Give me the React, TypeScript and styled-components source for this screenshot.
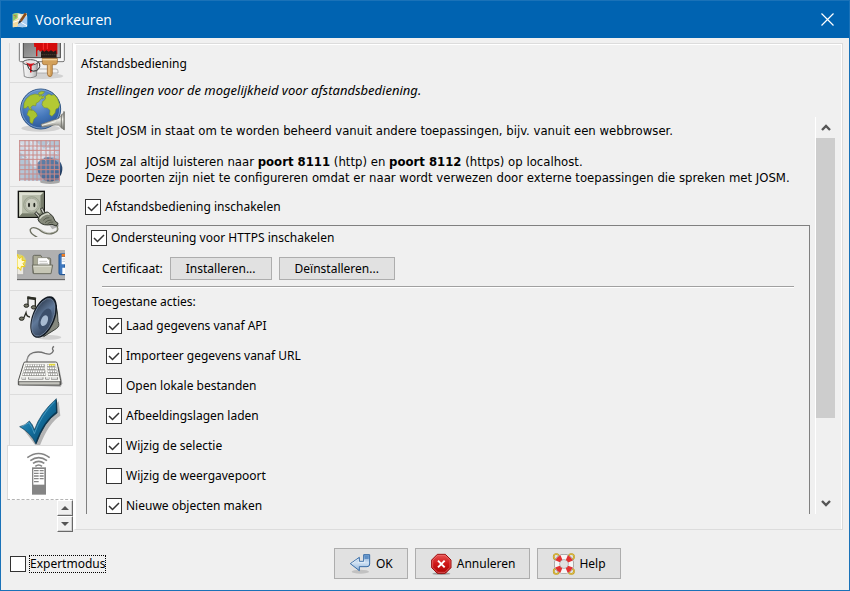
import React, { useState } from 'react';
import styled, { createGlobalStyle, css } from 'styled-components';

const GlobalStyle = createGlobalStyle`
  *, *::before, *::after { box-sizing: border-box; }
  body {
    margin: 0;
    background: #f0f0f0;
    color: #000;
    font-family: "Noto Sans", sans-serif;
    font-size: 12px;
    line-height: 16px;
  }
  button, input { font: inherit; color: inherit; margin: 0; }
`;

/* ---------- window frame ---------- */

const Window = styled.div`
  display: flex;
  flex-direction: column;
  height: 100vh;
  border: 1px solid #1a72b8;
  border-width: 0 1px 1px;
  background: #f0f0f0;
`;

const TitleBar = styled.header`
  display: flex;
  align-items: center;
  flex: none;
  gap: 7px;
  height: 38px;
  padding: 0 15px 0 11px;
  border-top: 1px solid #1a72b8;
  background: #0063b1;
  color: #fff;
`;

const Title = styled.h1`
  flex: 1;
  margin: 0;
  font-family: "Open Sans", "Noto Sans", sans-serif;
  font-size: 14px;
  font-weight: 400;
  line-height: 20px;
`;

const CloseButton = styled.button`
  display: flex;
  padding: 0;
  border: 0;
  background: none;
`;

const Body = styled.div`
  display: flex;
  flex: 1;
  min-height: 0;
  padding: 5px 6px 0;
`;

/* ---------- category tabs ---------- */

const Sidebar = styled.nav`
  display: flex;
  flex: none;
  flex-direction: column;
  width: 66px;
`;

const TabStrip = styled.div`
  display: flex;
  flex: 1;
  flex-direction: column;
  justify-content: flex-end;
  min-height: 0;
  overflow: hidden;
`;

const Tab = styled.button<{ $selected?: boolean }>`
  display: flex;
  flex: none;
  align-items: center;
  justify-content: center;
  height: 52px;
  margin: 0 0 0 2px;
  padding: 0;
  border: 1px solid #dcdcdc;
  border-top: 0;
  background: #f0f0f0;
  ${(p) =>
    p.$selected &&
    css`
      z-index: 1;
      height: 55px;
      margin: -2px 0 0;
      border-top: 1px solid #dcdcdc;
      border-right: 0;
      border-bottom: 1px dashed #b4b4b4;
      background: #fff;
    `}
`;

const Steppers = styled.div`
  display: flex;
  flex: none;
  flex-direction: column;
  align-self: flex-end;
  height: 32px;
`;

const Stepper = styled.button`
  display: flex;
  align-items: center;
  justify-content: center;
  width: 16px;
  height: 16px;
  padding: 0;
  border: 1px solid;
  border-color: #fff #696969 #696969 #fff;
  box-shadow: inset -1px -1px #d0d0d0;
  background: #f0f0f0;
`;

/* ---------- settings panel ---------- */

const Panel = styled.main`
  display: flex;
  flex: 1;
  flex-direction: column;
  min-width: 0;
  margin-bottom: 2px;
  padding: 12px 7px 15px 5px;
  border: 1px solid #dcdcdc;
  border-left: 3px solid #fff;
  box-shadow: inset 0 1px #fff, inset -1px 0 #fff;
`;

const PanelTitle = styled.h2`
  margin: 0;
  font-size: 12px;
  font-weight: 400;
  line-height: 16px;
`;

const Intro = styled.p`
  margin: 10px 6px 19px;
  font-size: 13px;
  font-style: italic;
`;

const ScrollPane = styled.div`
  display: flex;
  flex: 1;
  min-height: 0;
`;

const Content = styled.div`
  display: flex;
  flex: 1;
  flex-direction: column;
  min-width: 0;
  overflow: hidden;
  padding: 6px 5px 0 4px;
`;

const Description = styled.div`
  display: flex;
  flex-direction: column;
  gap: 15px;
  margin: 0 0 13px 1px;
  font-family: "DejaVu Sans Condensed", "Noto Sans", sans-serif;
  font-size: 13px;
`;

const Paragraph = styled.p`
  margin: 0;
`;

const ScrollBar = styled.div`
  display: flex;
  flex: none;
  flex-direction: column;
  width: 20px;
  border-left: 1px solid #fff;
`;

const ScrollButton = styled.button`
  display: flex;
  flex: none;
  align-items: center;
  justify-content: center;
  height: 21px;
  padding: 0;
  border: 0;
  background: none;
`;

const ScrollTrack = styled.div`
  flex: 1;
`;

const ScrollThumb = styled.div`
  height: 79%;
  background: #cdcdcd;
`;

/* ---------- form parts ---------- */

const CheckLabel = styled.label`
  display: flex;
  align-items: center;
  gap: 4px;
  width: fit-content;
`;

const CheckInput = styled.input`
  appearance: none;
  width: 16px;
  height: 16px;
  border: 1px solid #333;
  background: #fff;
`;

const CheckBox = styled.span`
  display: grid;
  flex: none;
  width: 16px;
  height: 16px;
  > * { grid-area: 1 / 1; }
  svg { z-index: 1; pointer-events: none; }
`;

const CheckText = styled.span<{ $focused?: boolean }>`
  outline: ${(p) => (p.$focused ? '1px dotted #000' : 'none')};
`;

const Group = styled.section`
  display: flex;
  flex: 1 0 auto;
  flex-direction: column;
  margin: 10px 0 0 1px;
  padding: 4px 15px 0 4px;
  border: 1px solid #808080;
  border-bottom: 0;
`;

const CertificateRow = styled.div`
  display: flex;
  align-items: center;
  gap: 7px;
  margin-left: 11px;
  padding: 11px 0 6px;
  border-bottom: 1px solid #a0a0a0;
  box-shadow: 0 1px #fff;
`;

const PlainButton = styled.button`
  height: 23px;
  padding: 0 15px;
  border: 1px solid #adadad;
  background: #e1e1e1;
  line-height: 16px;
`;

const ActionsTitle = styled.p`
  margin: 7px 0 8px 1px;
`;

const ActionList = styled.div`
  display: flex;
  flex-direction: column;
  gap: 14px;
  margin-left: 15px;
`;

/* ---------- footer ---------- */

const Footer = styled.footer`
  display: flex;
  flex: none;
  align-items: center;
  height: 58px;
  padding: 5px 0 0 9px;
`;

const FooterButtons = styled.div`
  display: flex;
  flex: 1;
  justify-content: center;
  gap: 7px;
`;

const IconButton = styled.button`
  display: flex;
  align-items: center;
  gap: 3px;
  height: 31px;
  padding: 0 14px;
  border: 1px solid #adadad;
  background: #e1e1e1;
`;

/* ---------- icons ---------- */

const AppIcon = () => (
  <svg width="16" height="16" viewBox="0 0 48 48" aria-hidden="true">
    <path d="M2 6l14-3 14 3 15-2v41l-15 1-14-2-14 2z" fill="#ece3c4" />
    <path d="M3 6l14-3v15L3 27z" fill="#8fce6c" />
    <path d="M3 28l14-8 4 12-6 12-12 2z" fill="#f6dca0" />
    <path d="M20 22l26-9v30l-15 3-14-3z" fill="#a9cdf0" />
    <path d="M4 31l20-7 5 8 16 9" stroke="#fff" strokeWidth="3" fill="none" />
    <path d="M22 5l6 7-5 8-5-5z" fill="#f4f4ee" />
    <path d="M38 2l7 4-16 23-6-4z" fill="#8b4a17" />
    <path d="M23 25l6 4-11 7z" fill="#342c28" />
    <path d="M5 10l8 2M8 17l5-4" stroke="#d94a32" strokeWidth="2" />
  </svg>
);

const CloseIcon = () => (
  <svg width="13" height="13" viewBox="0 0 13 13" aria-hidden="true">
    <path d="M.5 .5l12 12M12.5 .5l-12 12" stroke="#fff" strokeWidth="1.2" />
  </svg>
);

const TabIcon = ({ y, children }: { y: number; children: React.ReactNode }) => (
  <svg width="48" height="48" viewBox={`51 ${y} 144 144`} aria-hidden="true">
    {children}
  </svg>
);

const DisplayIcon = () => (
  <TabIcon y={-12}>
    <defs>
      <linearGradient id="screen" x1="0" y1="0" x2="1" y2="1">
        <stop offset="0" stopColor="#6f6f6f" />
        <stop offset="1" stopColor="#b9b9b9" />
      </linearGradient>
      <linearGradient id="bucket">
        <stop offset="0" stopColor="#f8f8f8" />
        <stop offset="0.6" stopColor="#dcdcdc" />
        <stop offset="1" stopColor="#a8a8a8" />
      </linearGradient>
    </defs>
    <ellipse cx="130" cy="117" rx="60" ry="9" fill="#000" opacity="0.12" />
    <rect x="58" y="-10" width="135" height="84" rx="4" fill="#f8f8f8" stroke="#777" strokeWidth="3" />
    <rect x="70" y="-6" width="111" height="68" fill="url(#screen)" stroke="#444" strokeWidth="3" />
    <path d="M97 96h70q7 0 7 6v6H97z" fill="#f2f2f2" stroke="#999" strokeWidth="2" />
    <path d="M99-6h73v58h-7v-8h-5v12h-6v-8h-5v6h-7v-8h-6v8h-7V46l-5-4-4 2-4-6-4 3v17h-4V30h-5z" fill="#d40c0c" />
    <path d="M130-6v44M142-6v42" stroke="#f33" strokeWidth="3" />
    <path d="M123 45l4-5 6 4 6-4 7 4 7-4 7 4 9-4 1 22h-47z" fill="#241b18" />
    <path d="M125 53h44" stroke="#5d4c3c" strokeWidth="3" strokeDasharray="3 3" />
    <path d="M127 64h45v13q0 5-6 6h-9v25q0 11-7 11-8 0-8-11V83h-9q-6 0-6-6z" fill="#d2a05a" stroke="#94602a" strokeWidth="2" />
    <path d="M127 68h44" stroke="#f1d29b" strokeWidth="4" />
    <path d="M145 84v28q2 6 4 0V84" fill="#edc78c" />
    <path d="M69 77l4 41q17 9 36-1l4-40z" fill="url(#bucket)" stroke="#666" strokeWidth="2" />
    <ellipse cx="91" cy="76" rx="22" ry="8" fill="#e5e5e5" stroke="#555" strokeWidth="3" />
    <path d="M77 76q12 8 28 1l-10 10v18q-3 5-5 0V91z" fill="#d4141a" />
    <path d="M82 82q5 26 28 19 16-12 5-27" stroke="#222" strokeWidth="3" fill="none" />
  </TabIcon>
);

const GlobeIcon = () => (
  <TabIcon y={144}>
    <defs>
      <radialGradient id="ocean" cx=".42" cy=".3" r=".75">
        <stop offset="0" stopColor="#83aade" />
        <stop offset=".55" stopColor="#4376b9" />
        <stop offset="1" stopColor="#285391" />
      </radialGradient>
      <linearGradient id="jack" x1="0" y1="0" x2="0" y2="1">
        <stop offset="0" stopColor="#777" />
        <stop offset=".4" stopColor="#f5f5ee" />
        <stop offset="1" stopColor="#686864" />
      </linearGradient>
    </defs>
    <ellipse cx="122" cy="274" rx="58" ry="10" fill="#000" opacity=".13" />
    <circle cx="122" cy="216" r="60" fill="url(#ocean)" stroke="#305685" strokeWidth="3" />
    <circle cx="122" cy="216" r="57" fill="none" stroke="#92b5df" strokeWidth="2" />
    <path d="M72 198l7-13 12-10 14-4 12 2 1 5 7-3 3 7-6 5-6 8-7 3-2 9-8-2-7 6 4 9-8-5-4-8-5 6-8 1zM86 219l14 1 9 8 3 9-10 9-5 14-7-4-1-16-8-7zM115 168l9-5 10 1-5 7-10 3z" fill="#a9c42f" stroke="#768b27" strokeWidth="1.5" />
    <path d="M132 191l5-7-1-7 11-6 7 4 9-2 9 11 7 19-4 10-7 3-3 12-9 10-7-5 1-13-8-7-10-1-6-9 2-10zM126 180l5-4 2 6-6 4z" fill="#b4ca34" stroke="#758c28" strokeWidth="1.5" />
    <path d="M123 262l39-13q17-2 23-15l8-9v54l-9-7q-7-11-19-8l-37 6q-5-2-5-7z" fill="url(#jack)" stroke="#74746d" strokeWidth="2" />
    <path d="M126 265l41-11" stroke="#f4f5ec" strokeWidth="3" />
    <path d="M184 232v42M192 222v56" stroke="#777770" strokeWidth="3" />
  </TabIcon>
);

const gridX = [59, 75, 87, 99, 111, 123, 138, 150, 163, 178];
const gridY = [311, 327, 340, 354, 367, 384, 398, 411, 426];

const GridIcon = () => (
  <TabIcon y={300}>
    <defs>
      <radialGradient id="lens" cx=".45" cy=".35" r=".65">
        <stop offset="0" stopColor="#8aa7ca" />
        <stop offset=".6" stopColor="#476c9a" />
        <stop offset="1" stopColor="#132949" />
      </radialGradient>
      <linearGradient id="mapSheet" x1="0" y1="0" x2="1" y2="1">
        <stop offset="0" stopColor="#c6d2e2" />
        <stop offset=".5" stopColor="#cfdae8" />
        <stop offset="1" stopColor="#5c7ca6" />
      </linearGradient>
    </defs>
    <ellipse cx="150" cy="434" rx="30" ry="7" fill="#000" opacity=".3" />
    <circle cx="150" cy="396" r="37" fill="url(#lens)" />
    <rect x="58" y="310" width="121" height="121" fill="url(#mapSheet)" opacity=".78" />
    <path d="M58 345l26 19 12 24 22 8 5 34H58zM106 311l26 24 46-4v-21z" fill="#8ba9c0" opacity=".45" />
    <path d="M112 378q28-34 62-2l4 53h-43q-27-15-23-51z" fill="#335b8c" opacity=".65" />
    <path d="M61 320l20 14 20-8 24 20 19-13 33 22M66 360l14 6 10-13 23 18 10-10 15 9M92 312l10 16-7 24M148 315l-13 20 14 24" stroke="#eef4fa" strokeWidth="2" fill="none" />
    <g stroke="#c98a88" strokeWidth="3">
      {gridX.map((x) => <path key={x} d={`M${x} 309v123`} />)}
      {gridY.map((y) => <path key={y} d={`M58 ${y}h122`} />)}
    </g>
  </TabIcon>
);

const PlugIcon = () => (
  <TabIcon y={12}>
    <defs>
      <linearGradient id="plate" x1="0" y1="0" x2="1" y2="1">
        <stop offset="0" stopColor="#c9cdbb" />
        <stop offset="1" stopColor="#888e7b" />
      </linearGradient>
    </defs>
    <path d="M146 118l29-3 2 9-20 9z" fill="#000" opacity=".25" />
    <rect x="55" y="19" width="78" height="78" fill="url(#plate)" stroke="#11120f" strokeWidth="4" />
    <path d="M59 93V23h70l-8 8H67v54z" fill="#dde0d3" />
    <path d="M59 94h71V24l-9 8v52H67z" fill="#777d6b" />
    <rect x="67" y="31" width="54" height="54" fill="#b7bcaa" />
    <circle cx="95" cy="59" r="24" fill="#b4baa7" stroke="#8a907e" strokeWidth="2" />
    <circle cx="95" cy="59" r="19" fill="#cacdbf" stroke="#9a9e90" strokeWidth="2" />
    <ellipse cx="87" cy="60" rx="3" ry="7" fill="#22251f" />
    <ellipse cx="103" cy="60" rx="3" ry="7" fill="#22251f" />
    <path d="M166 116q17 20-5 28-22 8-43-10-20-12-27-1-3 12 21 24" stroke="#6d7061" strokeWidth="4" fill="none" />
    <path d="M165 118q15 19-5 24-18 7-39-9" stroke="#a5a898" strokeWidth="2" fill="none" />
    <path d="M106 82l17 20M124 69l12 23" stroke="#2d2f29" strokeWidth="9" />
    <path d="M107 83l16 18M125 71l10 20" stroke="#d0d2ca" strokeWidth="4" />
    <path d="M114 103q0-9 13-16 13-9 19-4 15 9 19 25l9 7-5 8-13-5q-25 6-38-7z" fill="#85897a" stroke="#2f332b" strokeWidth="3" />
    <path d="M119 101q5-9 17-13 9-4 12 1" stroke="#d5d8cb" strokeWidth="4" fill="none" />
    <path d="M130 106q7-9 18-8M135 113q8-9 20-8M143 116q7-6 17-5" stroke="#3f4438" strokeWidth="2" fill="none" />
  </TabIcon>
);

const ToolbarIcon = () => (
  <TabIcon y={174}>
    <rect x="51" y="201" width="144" height="90" fill="#b0b0b0" />
    <path d="M51 290h144" stroke="#5c5c5c" strokeWidth="3" />
    <path d="M51 237h20v38H51z" fill="#eceae3" stroke="#999" strokeWidth="2" />
    <circle cx="56" cy="236" r="22" fill="#fff23f" opacity=".55" />
    <path d="M51 214l7 13 9-7-1 12 11 1-8 9 6 9-11-1-2 12-7-9-4 3z" fill="#fffbd1" stroke="#edcb14" strokeWidth="3" />
    <path d="M99 271v-50q0-4 4-4h19l5 8h21q4 0 4 5v41z" fill="#a9a995" stroke="#66675d" strokeWidth="3" />
    <path d="M113 224h27l9 8v23h-36z" fill="#fff" stroke="#858578" strokeWidth="2" />
    <path d="M118 235h23M118 241h26M118 247h20" stroke="#a9a9a4" strokeWidth="2" />
    <path d="M97 246h61l-5 26h-52z" fill="#c6c6b5" stroke="#6d6e62" strokeWidth="3" />
    <path d="M101 250h52" stroke="#ecece0" strokeWidth="2" />
    <path d="M195 213h-14q-4 0-4 4v53q0 5 5 5h13z" fill="#3e78be" stroke="#1d4e8b" strokeWidth="3" />
    <path d="M185 213h10v8h-10z" fill="#ef7d23" />
    <path d="M185 222h10v22h-10zM187 254h8v19h-8z" fill="#fff" />
    <path d="M187 228h8M187 235h8" stroke="#9daab9" strokeWidth="2" />
  </TabIcon>
);

const AudioIcon = () => (
  <TabIcon y={324}>
    <defs>
      <linearGradient id="cone" x1="0" y1="0" x2="1" y2="1">
        <stop offset="0" stopColor="#242f40" />
        <stop offset=".45" stopColor="#60799a" />
        <stop offset="1" stopColor="#253248" />
      </linearGradient>
    </defs>
    <ellipse cx="148" cy="457" rx="36" ry="7" fill="#000" opacity=".13" />
    <path d="M155 340q18 14 19 69 7 14-5 22l-38 24z" fill="#85887e" stroke="#3f433e" strokeWidth="3" />
    <ellipse cx="131" cy="396" rx="34" ry="66" transform="rotate(22 131 396)" fill="#111923" />
    <ellipse cx="130" cy="397" rx="29" ry="60" transform="rotate(22 130 397)" fill="url(#cone)" stroke="#8093ad" strokeWidth="2" />
    <ellipse cx="135" cy="403" rx="17" ry="34" transform="rotate(22 135 403)" fill="#3c4f6b" />
    <ellipse cx="133" cy="407" rx="10" ry="17" transform="rotate(22 133 407)" fill="#a8bbd2" />
    <path d="M84 361v-24l22 3v25" stroke="#2d2e26" strokeWidth="4" fill="none" />
    <path d="M82 338l26 4" stroke="#2d2e26" strokeWidth="8" />
    <ellipse cx="79" cy="362" rx="7" ry="5" fill="#77796a" stroke="#22231c" strokeWidth="3" />
    <ellipse cx="101" cy="367" rx="7" ry="5" fill="#77796a" stroke="#22231c" strokeWidth="3" />
    <path d="M71 400l7-17q2 13 12 13" stroke="#2d2e26" strokeWidth="4" fill="none" />
    <ellipse cx="65" cy="401" rx="7" ry="5" fill="#77796a" stroke="#22231c" strokeWidth="3" />
  </TabIcon>
);

const keyRows = [74, 83, 92, 101];

const KeyboardIcon = () => (
  <TabIcon y={12}>
    <path d="M65 133l117 4 5-10-10-50z" fill="#000" opacity=".3" />
    <path d="M82 68q-5-25 18-33 17-5 35 2 20 7 25-8-6-8 2-13" stroke="#707070" strokeWidth="4" fill="none" />
    <path d="M82 66q-3-22 20-29" stroke="#d2d2d2" strokeWidth="1.5" fill="none" />
    <path d="M75 63h92q4 0 5 4l10 52v12H55v-12l16-52q1-4 4-4z" fill="#f4f4f0" stroke="#4e4e4c" strokeWidth="3" />
    <path d="M56 122h124v10H56z" fill="#c4c4be" stroke="#373735" strokeWidth="2" />
    {keyRows.map((y, i) => (
      <g key={y}>
        <path d={`M${76 - i * 3} ${y}h${58 + i * 4}M${141 + i} ${y}h${25 + i * 2}`} stroke="#8b8b87" strokeWidth="8" />
        <path d={`M${77 - i * 3} ${y - 1}h${56 + i * 4}M${142 + i} ${y - 1}h${24 + i * 2}`} stroke="#fff" strokeWidth="5" strokeDasharray="5 2" />
      </g>
    ))}
    <path d="M65 112h13M85 112h45M136 112h12M153 112h21" stroke="#656563" strokeWidth="7" />
    <path d="M66 111h11M87 111h41M138 111h9M154 111h18" stroke="#fff" strokeWidth="4" />
    <path d="M147 71h18" stroke="#e3d83a" strokeWidth="5" />
  </TabIcon>
);

const CheckIcon = () => (
  <TabIcon y={168}>
    <defs>
      <linearGradient id="tick" x1="0" y1="0" x2="1" y2="1">
        <stop offset="0" stopColor="#4aaad6" />
        <stop offset=".5" stopColor="#13709f" />
        <stop offset="1" stopColor="#053552" />
      </linearGradient>
    </defs>
    <path d="M68 262l28-14 14 24q20-49 66-91l5 43q-35 22-61 89l-13 1z" fill="#000" opacity=".25" />
    <path d="M59 257q17-3 29-17 9 9 15 27 18-52 66-94l2 43q-38 24-63 93-17-35-49-52z" fill="url(#tick)" stroke="#17445d" strokeWidth="2" />
    <path d="M66 256l21-11q10 13 16 33 20-56 61-96" stroke="#79bddb" strokeWidth="3" fill="none" opacity=".5" />
    <path d="M169 178l1 36q-39 27-62 93" stroke="#05273c" strokeWidth="4" fill="none" opacity=".7" />
  </TabIcon>
);

const RemoteIcon = () => (
  <TabIcon y={24}>
    <g fill="none" stroke="#858585" strokeWidth="5">
      <path d="M82 50q34-25 67 0" />
      <path d="M91 59q25-18 50 0" />
      <path d="M99 67q17-12 34 0" />
      <path d="M106 76q10-8 20 0" />
    </g>
    <path d="M96 79h42v82H96z" fill="#858585" />
    <path d="M100 84h33v47h-33z" fill="#fff" />
    <path d="M102 89h14M102 97h14M102 105h14M102 113h14M102 122h14M119 89h12M119 97h12M119 105h12M119 113h12" stroke="#858585" strokeWidth="4" />
  </TabIcon>
);

const TriangleIcon = ({ down }: { down?: boolean }) => (
  <svg width="8" height="4" viewBox="0 0 8 4" aria-hidden="true">
    <path d={down ? 'M0 0h8L4 4z' : 'M4 0l4 4H0z'} fill="#555" />
  </svg>
);

const ChevronIcon = ({ down }: { down?: boolean }) => (
  <svg width="10" height="7" viewBox="0 0 10 7" aria-hidden="true">
    <path d={down ? 'M1 1l4 4 4-4' : 'M1 6l4-4 4 4'} stroke="#555" strokeWidth="2.4" fill="none" />
  </svg>
);

const OkIcon = () => (
  <svg width="24" height="24" viewBox="90 48 72 72" aria-hidden="true">
    <defs>
      <linearGradient id="arrow" x1="0" y1="0" x2="0" y2="1">
        <stop offset="0" stopColor="#6e9fd4" />
        <stop offset=".5" stopColor="#d1e2f3" />
        <stop offset="1" stopColor="#8fb3da" />
      </linearGradient>
    </defs>
    <ellipse cx="124" cy="107" rx="26" ry="6" fill="#000" opacity=".14" />
    <path d="M134 56h18v28q0 8-8 8h-23v12L94 83l27-19v12h13z" fill="url(#arrow)" stroke="#396da7" strokeWidth="3" strokeLinejoin="round" />
    <path d="M137 59h12v10h-12z" fill="#5d8ec5" />
    <path d="M98 83l20-14v10h19v-8" stroke="#edf5fc" strokeWidth="2" fill="none" />
  </svg>
);

const CancelIcon = () => (
  <svg width="24" height="24" viewBox="335 48 72 72" aria-hidden="true">
    <defs>
      <linearGradient id="stop" x1="0" y1="0" x2="0" y2="1">
        <stop offset="0" stopColor="#e85555" />
        <stop offset=".5" stopColor="#cf1515" />
        <stop offset="1" stopColor="#a90505" />
      </linearGradient>
    </defs>
    <ellipse cx="369" cy="113" rx="27" ry="4" fill="#000" opacity=".3" />
    <path d="M357 55h24l17 17v23l-17 17h-24l-17-17V72z" fill="url(#stop)" stroke="#970b0b" strokeWidth="3" />
    <path d="M358 58h22l15 15v21l-15 15h-22l-15-15V73z" fill="none" stroke="#ee7777" strokeWidth="2" />
    <path d="M359 74l20 20M379 74l-20 20" stroke="#fff" strokeWidth="6" />
  </svg>
);

const ringCorners = [[718, 62], [763, 62], [718, 106], [763, 106]];

const HelpIcon = () => (
  <svg width="24" height="24" viewBox="705 48 72 72" aria-hidden="true">
    {ringCorners.map(([x, y]) => (
      <g key={`${x}-${y}`} fill="none">
        <circle cx={x} cy={y} r="8" stroke="#b78e13" strokeWidth="5" />
        <circle cx={x} cy={y} r="8" stroke="#f2d85b" strokeWidth="2" />
      </g>
    ))}
    <circle cx="741" cy="84" r="21" fill="none" stroke="#777" strokeWidth="18" />
    <circle cx="741" cy="84" r="21" fill="none" stroke="#f6f6f6" strokeWidth="15" />
    <circle cx="741" cy="84" r="21" fill="none" stroke="#e33232" strokeWidth="15" strokeDasharray="16.5 16.5" strokeDashoffset="-8" />
  </svg>
);

const TickMark = () => (
  <svg width="16" height="16" viewBox="0 0 32 32" aria-hidden="true">
    <path d="M6 16l7 7 13-13" stroke="#333" strokeWidth="3" fill="none" />
  </svg>
);

/* ---------- composition ---------- */

type CheckProps = { label: string; initial?: boolean; focused?: boolean };

const Check = ({ label, initial = false, focused }: CheckProps) => {
  const [checked, setChecked] = useState(initial);
  return (
    <CheckLabel>
      <CheckBox>
        <CheckInput type="checkbox" checked={checked} onChange={(e) => setChecked(e.target.checked)} />
        {checked && <TickMark />}
      </CheckBox>
      <CheckText $focused={focused}>{label}</CheckText>
    </CheckLabel>
  );
};

const tabs = [
  { name: 'Weergave', Icon: DisplayIcon },
  { name: 'Verbinding', Icon: GlobeIcon },
  { name: 'Kaartprojectie', Icon: GridIcon },
  { name: 'Plug-ins', Icon: PlugIcon },
  { name: 'Werkbalk', Icon: ToolbarIcon },
  { name: 'Audio', Icon: AudioIcon },
  { name: 'Sneltoetsen', Icon: KeyboardIcon },
  { name: 'Validatie', Icon: CheckIcon },
  { name: 'Afstandsbediening', Icon: RemoteIcon },
];

const actions = [
  { label: 'Laad gegevens vanaf API', on: true },
  { label: 'Importeer gegevens vanaf URL', on: true },
  { label: 'Open lokale bestanden', on: false },
  { label: 'Afbeeldingslagen laden', on: true },
  { label: 'Wijzig de selectie', on: true },
  { label: 'Wijzig de weergavepoort', on: false },
  { label: 'Nieuwe objecten maken', on: true },
];

export default function App() {
  const [current, setCurrent] = useState('Afstandsbediening');
  return (
    <>
      <GlobalStyle />
      <Window>
        <TitleBar>
          <AppIcon />
          <Title>Voorkeuren</Title>
          <CloseButton aria-label="Sluiten"><CloseIcon /></CloseButton>
        </TitleBar>
        <Body>
          <Sidebar>
            <TabStrip>
              {tabs.map(({ name, Icon }) => (
                <Tab key={name} aria-label={name} $selected={name === current} onClick={() => setCurrent(name)}>
                  <Icon />
                </Tab>
              ))}
            </TabStrip>
            <Steppers>
              <Stepper aria-label="Omhoog"><TriangleIcon /></Stepper>
              <Stepper aria-label="Omlaag"><TriangleIcon down /></Stepper>
            </Steppers>
          </Sidebar>
          <Panel>
            <PanelTitle>Afstandsbediening</PanelTitle>
            <Intro>Instellingen voor de mogelijkheid voor afstandsbediening.</Intro>
            <ScrollPane>
              <Content>
                <Description>
                  <Paragraph>
                    Stelt JOSM in staat om te worden beheerd vanuit andere toepassingen, bijv. vanuit een webbrowser.
                  </Paragraph>
                  <Paragraph>
                    JOSM zal altijd luisteren naar <b>poort 8111</b> (http) en <b>poort 8112</b> (https) op localhost.
                    <br />
                    Deze poorten zijn niet te configureren omdat er naar wordt verwezen door externe toepassingen die spreken met JOSM.
                  </Paragraph>
                </Description>
                <Check label="Afstandsbediening inschakelen" initial />
                <Group>
                  <Check label="Ondersteuning voor HTTPS inschakelen" initial />
                  <CertificateRow>
                    <span>Certificaat:</span>
                    <PlainButton>Installeren...</PlainButton>
                    <PlainButton>Deïnstalleren...</PlainButton>
                  </CertificateRow>
                  <ActionsTitle>Toegestane acties:</ActionsTitle>
                  <ActionList>
                    {actions.map((a) => (
                      <Check key={a.label} label={a.label} initial={a.on} />
                    ))}
                  </ActionList>
                </Group>
              </Content>
              <ScrollBar>
                <ScrollButton aria-label="Omhoog schuiven"><ChevronIcon /></ScrollButton>
                <ScrollTrack><ScrollThumb /></ScrollTrack>
                <ScrollButton aria-label="Omlaag schuiven"><ChevronIcon down /></ScrollButton>
              </ScrollBar>
            </ScrollPane>
          </Panel>
        </Body>
        <Footer>
          <Check label="Expertmodus" focused />
          <FooterButtons>
            <IconButton><OkIcon />OK</IconButton>
            <IconButton><CancelIcon />Annuleren</IconButton>
            <IconButton><HelpIcon />Help</IconButton>
          </FooterButtons>
        </Footer>
      </Window>
    </>
  );
}
